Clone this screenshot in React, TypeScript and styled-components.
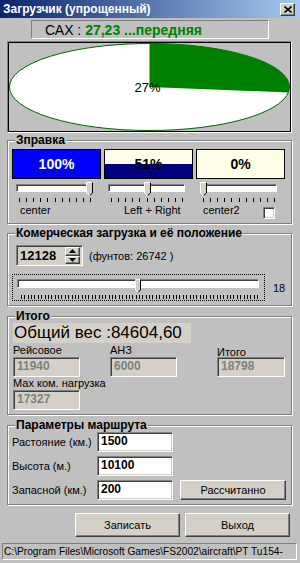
import React from "react";
import styled, { createGlobalStyle } from "styled-components";

const GlobalStyle = createGlobalStyle`
  html, body { margin: 0; padding: 0; background: #c0c0c0; }
  body { font-family: "Liberation Sans", Arial, sans-serif; font-size: 11px; color: #000; }
  * { box-sizing: border-box; }
`;

const Window = styled.div`
  width: 300px;
  height: 563px;
  overflow: hidden;
  background: #c0c0c0;
  display: flex;
  flex-direction: column;
`;

const TitleBar = styled.div`
  height: 18px;
  flex: none;
  display: flex;
  align-items: center;
  justify-content: space-between;
  padding: 0 5px 0 3px;
  background: linear-gradient(to right, #0a246a, #a6caf0);
  color: #fff;
  font-weight: bold;
  font-size: 12px;
  white-space: nowrap;
`;

const CloseButton = styled.div`
  width: 15px;
  height: 13px;
  background: #d4d0c8;
  border: 1px solid;
  border-color: #fff #404040 #404040 #fff;
  box-shadow: inset -1px -1px 0 #808080;
  display: flex;
  align-items: center;
  justify-content: center;
`;

const Body = styled.div`
  flex: 1;
  display: flex;
  flex-direction: column;
  padding: 0 8px 0 7px;
`;

const CaxPanel = styled.div`
  margin: 2px 0 0 24px;
  width: 238px;
  height: 19px;
  border: 1px solid;
  border-color: #808080 #fff #fff #808080;
  display: flex;
  align-items: center;
  padding-left: 13px;
  font-size: 14px;
  white-space: nowrap;
`;

const CaxValue = styled.span`
  color: #008000;
  font-weight: bold;
`;

const PieFrame = styled.div`
  margin-top: 2px;
  border: 1px solid;
  border-color: #808080 #fff #fff #808080;
`;

const PieInner = styled.div`
  border: 1px solid #000;
  background: #c0c0c0;
  height: 90px;
  svg { display: block; }
`;

const Group = styled.fieldset<{ $mt: number }>`
  margin: ${(p) => p.$mt}px 0 0 0;
  padding: 0 5px 4px 4px;
  border: 1px solid #808080;
  box-shadow: inset 1px 1px 0 #fff, 1px 1px 0 #fff;
  min-width: 0;
  font-weight: normal;
`;

const Legend = styled.legend`
  font-weight: bold;
  font-size: 12px;
  line-height: 14px;
  padding: 0 1px;
  margin-left: 3px;
  background: #c0c0c0;
`;

const TankRow = styled.div`
  display: grid;
  grid-template-columns: repeat(3, 89px);
  column-gap: 3px;
  margin-top: 2px;
`;

const TankBox = styled.div<{ $fill: number; $fillColor: string; $text: string }>`
  height: 30px;
  border: 1px solid #000;
  background: linear-gradient(
    to top,
    ${(p) => p.$fillColor} ${(p) => p.$fill}%,
    #ffffe8 ${(p) => p.$fill}%
  );
  display: flex;
  align-items: center;
  justify-content: center;
  font-weight: bold;
  font-size: 14px;
  color: ${(p) => p.$text};
`;

const SliderRow = styled.div`
  display: grid;
  grid-template-columns: repeat(3, 89px);
  column-gap: 3px;
`;

const SliderCol = styled.div`
  display: flex;
  flex-direction: column;
`;

const TrackArea = styled.div<{ $w: number; $h: number }>`
  position: relative;
  width: ${(p) => p.$w}px;
  height: ${(p) => p.$h}px;
`;

const SmallTrackArea = styled(TrackArea)`
  margin: 3px 0 0 4px;
`;

const Track = styled.div<{ $h: number }>`
  margin-top: 2px;
  height: ${(p) => p.$h}px;
  background: #fff;
  border: 1px solid;
  border-color: #808080 #fff #fff #808080;
  box-shadow: inset 1px 1px 0 #404040;
`;

const ThumbHolder = styled.div`
  position: absolute;
  top: 0;
  line-height: 0;
`;

const Ticks = styled.svg`
  display: block;
  margin-top: 2px;
`;

const SmallTicks = styled(Ticks)`
  margin-left: 4px;
`;

const SliderLabel = styled.div<{ $indent: number }>`
  display: flex;
  align-items: flex-start;
  margin-top: 2px;
  padding-left: ${(p) => p.$indent}px;
  font-size: 11px;
  font-weight: normal;
  line-height: 13px;
  height: 15px;
  white-space: nowrap;
`;

const CheckBox = styled.span`
  margin-left: auto;
  margin-right: 10px;
  margin-top: 3px;
  width: 12px;
  height: 12px;
  background: #fff;
  border: 1px solid;
  border-color: #808080 #fff #fff #808080;
  box-shadow: inset 1px 1px 0 #404040, inset -1px -1px 0 #d4d0c8;
`;

const SpinRow = styled.div`
  display: flex;
  align-items: center;
  margin: 5px 0 0 4px;
`;

const sunken = `
  border: 1px solid;
  border-color: #808080 #fff #fff #808080;
  box-shadow: inset 1px 1px 0 #404040, inset -1px -1px 0 #d4d0c8;
`;

const raised = `
  border: 1px solid;
  border-color: #fff #404040 #404040 #fff;
  box-shadow: inset -1px -1px 0 #808080;
  background: #d4d0c8;
`;

const SpinEdit = styled.div`
  ${sunken}
  width: 67px;
  height: 21px;
  background: #d4d0c8;
  display: flex;
  align-items: center;
  padding: 2px 2px 2px 3px;
  font-weight: bold;
  font-size: 13px;
`;

const SpinButtons = styled.div`
  margin-left: auto;
  width: 15px;
  height: 17px;
  display: flex;
  flex-direction: column;
`;

const SpinBtn = styled.div`
  ${raised}
  flex: 1;
  display: flex;
  align-items: center;
  justify-content: center;
  line-height: 0;
`;

const FundsText = styled.span`
  margin-left: 6px;
  font-size: 11px;
  font-weight: normal;
`;

const TrackRow = styled.div`
  display: flex;
  align-items: center;
  margin-top: 8px;
`;

const FocusRect = styled.div`
  width: 253px;
  height: 27px;
  border: 1px dotted #000;
  padding: 2px 0 0 4px;
`;

const TrackValue = styled.span`
  margin-left: 8px;
  font-size: 11px;
  font-weight: normal;
`;

const BigTotal = styled.div`
  margin-left: 1px;
  width: 178px;
  height: 20px;
  background: #d4d0c8;
  font-size: 17px;
  font-weight: normal;
  line-height: 20px;
  padding-left: 1px;
  white-space: nowrap;
`;

const FieldGrid = styled.div`
  display: grid;
  grid-template-columns: 97px 107px 68px;
  grid-template-rows: 13px 20px 13px 20px;
  margin: 1px 0 0 1px;
`;

const FieldLabel = styled.div<{ $span?: number; $dy?: number }>`
  font-size: 11px;
  font-weight: normal;
  line-height: 13px;
  white-space: nowrap;
  grid-column: span ${(p) => p.$span || 1};
  padding-top: ${(p) => p.$dy || 0}px;
`;

const ReadOnlyEdit = styled.div<{ $w: number }>`
  ${sunken}
  width: ${(p) => p.$w}px;
  height: 20px;
  background: #d4d0c8;
  color: #808080;
  font-weight: bold;
  font-size: 12px;
  line-height: 16px;
  padding-left: 3px;
`;

const RouteGrid = styled.div`
  display: grid;
  grid-template-columns: 85px 76px 1fr;
  grid-auto-rows: 20px;
  row-gap: 4px;
`;

const RouteLabel = styled.div`
  font-size: 11px;
  font-weight: normal;
  align-self: center;
  white-space: nowrap;
`;

const Edit = styled.div`
  ${sunken}
  background: #fff;
  font-weight: bold;
  font-size: 12px;
  line-height: 16px;
  padding-left: 3px;
`;

const Button = styled.div<{ $w?: number }>`
  ${raised}
  ${(p) => (p.$w ? `width: ${p.$w}px;` : "")}
  display: flex;
  align-items: center;
  justify-content: center;
  font-size: 11px;
  font-weight: normal;
`;

const CalcButton = styled(Button)`
  margin-left: 7px;
`;

const ButtonRow = styled.div`
  display: flex;
  justify-content: flex-end;
  gap: 5px;
  margin: 8px 2px 0 0;
  height: 24px;
`;

const StatusBar = styled.div`
  margin: 6px -5px 0 -5px;
  height: 17px;
  border: 1px solid;
  border-color: #808080 #fff #fff #808080;
  font-size: 10.2px;
  line-height: 15px;
  padding-left: 1px;
  white-space: nowrap;
  overflow: hidden;
`;

function ThumbShape({ w, h, p }: { w: number; h: number; p: number }) {
  const r = w - 0.5;
  const b = h - p;
  const m = w / 2;
  return (
    <svg width={w} height={h}>
      <polygon points={`0.5,0.5 ${r},0.5 ${r},${b} ${m},${h - 0.5} 0.5,${b}`} fill="#d4d0c8" />
      <polyline points={`0.5,${b} 0.5,0.5 ${r},0.5`} stroke="#fff" fill="none" />
      <polyline points={`${r},0.5 ${r},${b} ${m},${h - 0.5}`} stroke="#000" fill="none" />
      <polyline points={`${m},${h - 0.5} 0.5,${b}`} stroke="#fff" fill="none" />
    </svg>
  );
}

function TickMarks({ w, from, to, n, Comp }: { w: number; from: number; to: number; n: number; Comp: typeof Ticks }) {
  const xs = Array.from({ length: n }, (_, i) => Math.round(from + ((to - from) * i) / (n - 1)) + 0.5);
  return (
    <Comp width={w} height={4}>
      {xs.map((x, i) => (
        <line key={i} x1={x} x2={x} y1={0} y2={4} stroke="#000" strokeWidth={1} />
      ))}
    </Comp>
  );
}

function SmallSlider({ value }: { value: number }) {
  const w = 77;
  const tw = 7;
  return (
    <>
      <SmallTrackArea $w={w} $h={14}>
        <Track $h={8} />
        <ThumbHolder style={{ left: Math.round((w - tw) * value) }}>
          <ThumbShape w={tw} h={14} p={3} />
        </ThumbHolder>
      </SmallTrackArea>
      <TickMarks w={w} from={3} to={74} n={11} Comp={SmallTicks} />
    </>
  );
}

function Pie({ percent }: { percent: number }) {
  const W = 281;
  const H = 88;
  const cx = W / 2;
  const cy = H / 2;
  const rx = 140;
  const ry = 43.5;
  const ang = ((percent / 100) * 360 - 90) * (Math.PI / 180);
  const ex = cx + rx * Math.cos(ang);
  const ey = cy + ry * Math.sin(ang);
  const large = percent > 50 ? 1 : 0;
  return (
    <svg width={W} height={H}>
      <ellipse cx={cx} cy={cy} rx={rx} ry={ry} fill="#fff" stroke="#006400" strokeWidth={1} />
      <path
        d={`M ${cx} ${cy} L ${cx} ${cy - ry} A ${rx} ${ry} 0 ${large} 1 ${ex} ${ey} Z`}
        fill="#008000"
      />
      <text
        x={cx - 2}
        y={cy + 5}
        textAnchor="middle"
        fontSize={13}
        fontFamily="Liberation Sans, Arial, sans-serif"
        fill="#000"
      >
        {percent}%
      </text>
    </svg>
  );
}

function ArrowIcon({ up }: { up: boolean }) {
  return (
    <svg width={7} height={4}>
      <polygon points={up ? "3.5,0 7,4 0,4" : "0,0 7,0 3.5,4"} fill="#000" />
    </svg>
  );
}

export default function App() {
  const tanks = [
    { v: 100, fill: "#0000ff", text: "#ffffc8", pos: 1, label: "center", indent: 8 },
    { v: 51, fill: "#000080", text: "#000", pos: 0.52, label: "Left + Right", indent: 20 },
    { v: 0, fill: "#000080", text: "#000", pos: 0, label: "center2", indent: 7 },
  ];
  const bigW = 242;
  const bigThumb = 6;
  const bigPos = 0.5;
  return (
    <>
      <GlobalStyle />
      <Window>
        <TitleBar>
          <span>Загрузчик (упрощенный)</span>
          <CloseButton>
            <svg width={8} height={7}>
              <path d="M0.5 0.5 L7.5 6.5 M7.5 0.5 L0.5 6.5" stroke="#000" strokeWidth={1.6} />
            </svg>
          </CloseButton>
        </TitleBar>
        <Body>
          <CaxPanel>
            САХ :&nbsp;<CaxValue>27,23 ...передняя</CaxValue>
          </CaxPanel>
          <PieFrame>
            <PieInner>
              <Pie percent={27} />
            </PieInner>
          </PieFrame>

          <Group $mt={0}>
            <Legend>Зправка</Legend>
            <TankRow>
              {tanks.map((t, i) => (
                <TankBox key={i} $fill={t.v} $fillColor={t.fill} $text={t.text}>
                  {t.v}%
                </TankBox>
              ))}
            </TankRow>
            <SliderRow>
              {tanks.map((t, i) => (
                <SliderCol key={i}>
                  <SmallSlider value={t.pos} />
                  <SliderLabel $indent={t.indent}>
                    {t.label}
                    {i === 2 && <CheckBox />}
                  </SliderLabel>
                </SliderCol>
              ))}
            </SliderRow>
          </Group>

          <Group $mt={2}>
            <Legend>Комерческая загрузка и её положение</Legend>
            <SpinRow>
              <SpinEdit>
                12128
                <SpinButtons>
                  <SpinBtn>
                    <ArrowIcon up />
                  </SpinBtn>
                  <SpinBtn>
                    <ArrowIcon up={false} />
                  </SpinBtn>
                </SpinButtons>
              </SpinEdit>
              <FundsText>(фунтов: 26742 )</FundsText>
            </SpinRow>
            <TrackRow>
              <FocusRect>
                <TrackArea $w={bigW} $h={14}>
                  <Track $h={9} />
                  <ThumbHolder style={{ left: Math.round((bigW - bigThumb) * bigPos) }}>
                    <ThumbShape w={bigThumb} h={14} p={3} />
                  </ThumbHolder>
                </TrackArea>
                <TickMarks w={bigW} from={4} to={240} n={71} Comp={Ticks} />
              </FocusRect>
              <TrackValue>18</TrackValue>
            </TrackRow>
          </Group>

          <Group $mt={3}>
            <Legend>Итого</Legend>
            <BigTotal>Общий вес :84604,60</BigTotal>
            <FieldGrid>
              <FieldLabel>Рейсовое</FieldLabel>
              <FieldLabel>АНЗ</FieldLabel>
              <FieldLabel $dy={2}>Итого</FieldLabel>
              <ReadOnlyEdit $w={67}>11940</ReadOnlyEdit>
              <ReadOnlyEdit $w={67}>6000</ReadOnlyEdit>
              <ReadOnlyEdit $w={68}>18798</ReadOnlyEdit>
              <FieldLabel $span={3}>Мах ком. нагрузка</FieldLabel>
              <ReadOnlyEdit $w={67}>17327</ReadOnlyEdit>
            </FieldGrid>
          </Group>

          <Group $mt={3}>
            <Legend>Параметры маршрута</Legend>
            <RouteGrid>
              <RouteLabel>Растояние (км.)</RouteLabel>
              <Edit>1500</Edit>
              <span />
              <RouteLabel>Высота (м.)</RouteLabel>
              <Edit>10100</Edit>
              <span />
              <RouteLabel>Запасной (км.)</RouteLabel>
              <Edit>200</Edit>
              <CalcButton>Рассчитанно</CalcButton>
            </RouteGrid>
          </Group>

          <ButtonRow>
            <Button $w={105}>Записать</Button>
            <Button $w={105}>Выход</Button>
          </ButtonRow>

          <StatusBar>C:\Program Files\Microsoft Games\FS2002\aircraft\PT Tu154-</StatusBar>
        </Body>
      </Window>
    </>
  );
}
